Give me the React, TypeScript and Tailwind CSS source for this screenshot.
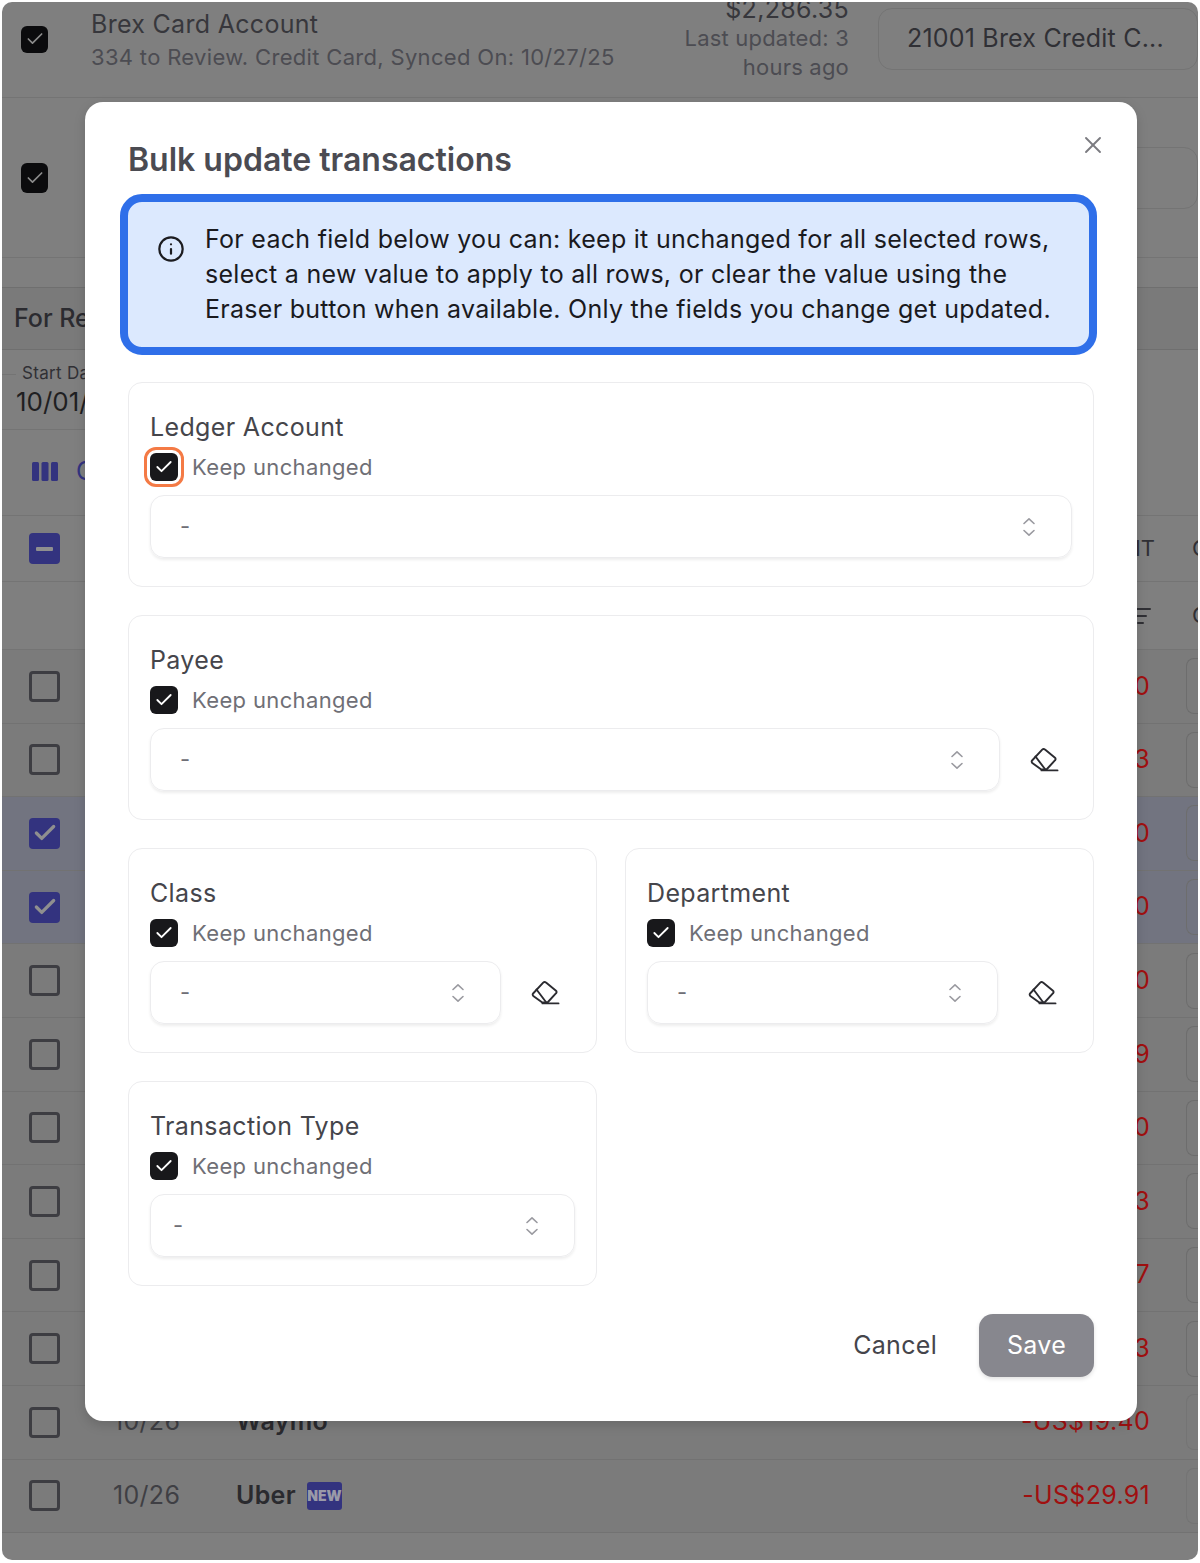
import { Check, Info, X } from 'lucide-react'

type Row = { amount: string; selected?: boolean; date?: string; name?: string; isNew?: boolean }

const ROWS: Row[] = [
  { amount: '-US$25.00' },
  { amount: '-US$41.73' },
  { amount: '-US$30.00', selected: true },
  { amount: '-US$30.00', selected: true },
  { amount: '-US$18.30' },
  { amount: '-US$12.59' },
  { amount: '-US$20.00' },
  { amount: '-US$16.43' },
  { amount: '-US$33.77' },
  { amount: '-US$22.83' },
  { amount: '-US$19.40', date: '10/26', name: 'Waymo' },
  { amount: '-US$29.91', date: '10/26', name: 'Uber', isNew: true },
]

function EraserIcon() {
  return (
    <svg width="30" height="28" viewBox="0 0 30 28" fill="none" stroke="#2b2b30" strokeWidth="1.9" strokeLinejoin="round" strokeLinecap="round">
      <path d="M13.2 3.6a2 2 0 0 1 2.8 0l10 8.2a1.6 1.6 0 0 1 .1 2.4l-8.6 9.3h-5.2l-9-6.6a1.6 1.6 0 0 1-.2-2.4z" />
      <path d="M6.5 10.5l10 13.3" />
      <path d="M12.5 24.4h16" />
    </svg>
  )
}

function UpDown() {
  return (
    <svg width="14" height="20" viewBox="0 0 14 20" fill="none" stroke="#9a9aa0" strokeWidth="1.6" strokeLinecap="round" strokeLinejoin="round">
      <path d="M2 6.5L7 1.8l5 4.7" />
      <path d="M2 13.5l5 4.7 5-4.7" />
    </svg>
  )
}

function DarkCheck({ focused }: { focused?: boolean }) {
  return (
    <span
      className={`flex h-[28px] w-[28px] shrink-0 items-center justify-center rounded-[6px] bg-[#18181b] ${
        focused ? 'outline-[3px] outline-offset-[3px] outline-[#f47a45]' : ''
      }`}
    >
      <Check size={20} color="#ffffff" strokeWidth={2.2} />
    </span>
  )
}

function FieldCard({ label, eraser, selectW, focused, dashLeft }: { label: string; eraser?: boolean; selectW?: string; focused?: boolean; dashLeft?: string }) {
  return (
    <div className="h-[205px] rounded-[14px] border border-[#ececee] px-[21px] pt-[28px]">
      <div className="h-[32px] text-[25px] leading-[32px] tracking-[0.35px] text-[#45454b]">{label}</div>
      <div className="mt-[4px] flex h-[40px] items-center gap-[14px]">
        <DarkCheck focused={focused} />
        <span className="text-[22px] tracking-[0.35px] text-[#6f6f76]">Keep unchanged</span>
      </div>
      <div className="mt-[8px] flex items-center">
        <div className={`flex h-[63px] items-center justify-between rounded-[14px] border border-[#ececee] pr-[35px] shadow-[0_2px_3px_rgba(0,0,0,0.07)] ${selectW ?? 'w-full'} ${dashLeft ?? 'pl-[29px]'}`}>
          <span className="text-[22px] text-[#6f6f76]">-</span>
          <UpDown />
        </div>
        {eraser && (
          <div className="ml-[29px]">
            <EraserIcon />
          </div>
        )}
      </div>
    </div>
  )
}

function AccountRow({ h, title, sub, amount, updated, button, border }: { h: string; title?: string; sub?: string; amount?: string; updated?: boolean; button?: string; border: string }) {
  return (
    <div className={`flex items-center border-b border-[#747474] pl-[19px] ${h} ${border}`}>
      <span className="flex h-[30px] w-[27px] shrink-0 items-center justify-center rounded-[6px] bg-[#0b0b0d]">
        <Check size={20} color="#8a8a8a" strokeWidth={2} />
      </span>
      <div className="ml-[43px] w-[540px]">
        {title && <div className="text-[25px] leading-[34px] tracking-[0.3px] text-[#37373c]">{title}</div>}
        {sub && <div className="mt-[1px] text-[22px] leading-[30px] tracking-[0.32px] text-[#4c4c52]">{sub}</div>}
      </div>
      <div className="mt-[-8px] w-[232px] text-right">
        {amount && <div className="text-[25px] leading-[24px] tracking-[0.3px] text-[#37373c]">{amount}</div>}
        {updated && <div className="ml-auto mt-[3px] w-[226px] text-[22px] leading-[29px] tracking-[0.2px] text-[#4c4c52]">Last updated: 3 hours ago</div>}
      </div>
      <div className="ml-[29px] flex h-[62px] w-[320px] shrink-0 items-center rounded-[14px] border border-[#747474] pl-[28px] text-[25px] tracking-[0.2px] text-[#303035]">
        {button}
      </div>
    </div>
  )
}

export default function App() {
  return (
    <div className="relative h-[1563px] w-[1200px] overflow-hidden bg-white font-['Inter',sans-serif]">
      {/* page behind the dialog */}
      <div className="mx-[2px] mt-[2px] h-[1558px] overflow-hidden rounded-[10px] bg-[#7f7f7f]">
        <div className="h-[96px] overflow-hidden border-b border-[#747474]">
          <div className="flex h-[74px] items-center pl-[19px]">
            <span className="flex h-[27px] w-[27px] shrink-0 items-center justify-center rounded-[6px] bg-[#0b0b0d]">
              <Check size={20} color="#8a8a8a" strokeWidth={2} />
            </span>
            <div className="ml-[43px] w-[540px]">
              <div className="text-[25px] leading-[34px] tracking-[0.3px] text-[#37373c]">Brex Card Account</div>
              <div className="mt-[1px] text-[22px] leading-[30px] tracking-[0.32px] text-[#4c4c52]">334 to Review. Credit Card, Synced On: 10/27/25</div>
            </div>
            <div className="w-[232px] text-right">
              <div className="text-[25px] leading-[24px] tracking-[0.3px] text-[#37373c]">$2,286.35</div>
              <div className="ml-auto mt-[3px] w-[226px] text-[22px] leading-[29px] tracking-[0.2px] text-[#4c4c52]">Last updated: 3 hours ago</div>
            </div>
            <div className="ml-[29px] flex h-[62px] w-[320px] shrink-0 items-center rounded-[14px] border border-[#747474] pl-[28px] text-[25px] tracking-[0.2px] text-[#303035]">
              21001 Brex Credit C...
            </div>
          </div>
        </div>
        <AccountRow h="h-[160px]" border="" button="" />
        <div className="h-[30px] border-b border-[#6f6f6f] bg-[#7f7f7f]" />
        <div className="flex h-[62px] items-center border-b border-[#6f6f6f] bg-[#7a7a7a] pl-[12px] text-[25px] font-medium text-[#2b2b30]">For Review</div>
        <div className="relative h-[80px]">
          <div className="absolute left-0 top-[24px] h-[56px] w-[400px] border-y border-[#747474]" />
          <span className="absolute left-[14px] top-[12px] bg-[#7f7f7f] px-[6px] text-[17px] leading-[22px] tracking-[0.3px] text-[#303035]">Start Date</span>
          <span className="absolute left-[14px] top-[36px] text-[26px] leading-[32px] text-[#1f1f22]">10/01/25</span>
        </div>
        <div className="flex h-[85px] items-center gap-[18px] pl-[30px] pb-[2px]">
          <svg width="26" height="19" viewBox="0 0 26 19" fill="#33337f">
            <rect x="0" y="0" width="7" height="19" rx="1.5" />
            <rect x="9.5" y="0" width="7" height="19" rx="1.5" />
            <rect x="19" y="0" width="7" height="19" rx="1.5" />
          </svg>
          <span className="text-[25px] text-[#33337f]">Columns</span>
        </div>
        <div className="flex h-[67px] items-center border-y border-[#747474] pl-[27px]">
          <span className="flex h-[31px] w-[31px] items-center justify-center rounded-[4px] bg-[#33337f]">
            <span className="h-[4px] w-[17px] rounded-[1px] bg-[#8f8f8f]" />
          </span>
          <span className="ml-auto text-[22px] text-[#303035]">AMOUNT</span>
          <span className="ml-[37px] w-[6px] text-[22px] text-[#303035]">C</span>
        </div>
        <div className="flex h-[68px] items-center justify-end border-b border-[#747474]">
          <svg width="18" height="18" viewBox="0 0 18 18" stroke="#303035" strokeWidth="2" strokeLinecap="round">
            <path d="M1 2h16M3 9h10M5 16h5" />
          </svg>
          <span className="ml-[41px] w-[6px] text-[22px] text-[#303035]">C</span>
        </div>
        {ROWS.map((row) => (
          <div
            key={row.amount + row.date + row.name}
            className={`flex h-[73.6px] items-center border-b border-[#727272] pl-[27px] ${row.selected ? 'bg-[#727480]' : 'bg-[#7b7b7b]'}`}
          >
            {row.selected ? (
              <span className="flex h-[31px] w-[31px] shrink-0 items-center justify-center rounded-[4px] bg-[#33337f]">
                <Check size={26} color="#8f8f8f" strokeWidth={3} />
              </span>
            ) : (
              <span className="h-[31px] w-[31px] shrink-0 rounded-[4px] border-[3px] border-[#3d3d42]" />
            )}
            <span className="ml-[53px] w-[123px] shrink-0 text-[25px] tracking-[0.3px] text-[#3f3f44]">{row.date}</span>
            <span className="shrink-0 text-[25px] font-semibold tracking-[0.3px] text-[#2a2a2e]">{row.name}</span>
            {row.isNew && (
              <span className="ml-[11px] flex h-[28px] w-[35px] shrink-0 items-center justify-center rounded-[3px] bg-[#33337f] text-[14px] font-black leading-none text-[#9a9aa8]">NEW</span>
            )}
            <span className="ml-auto shrink-0 text-[25px] tracking-[0.3px] text-[#a01010]">{row.amount}</span>
            <span className={`ml-[36px] h-[56px] w-[12px] shrink-0 rounded-l-[8px] border border-r-0 ${row.name === 'Uber' || row.name === 'Waymo' ? 'border-[#747474]' : 'border-[#6d6d6d]'}`} />
          </div>
        ))}
      </div>

      {/* dialog */}
      <div className="absolute left-[85px] top-[102px] h-[1319px] w-[1052px] rounded-[18px] bg-white px-[43px] shadow-[0_4px_12px_rgba(0,0,0,0.15)]">
        <button className="absolute right-[30px] top-[29px] text-[#7b7b80]">
          <X size={28} strokeWidth={1.6} />
        </button>
        <h2 className="pt-[38px] text-[32px] font-semibold leading-[40px] text-[#4b4b52]">Bulk update transactions</h2>
        <div className="mt-[14px] ml-[-8px] mr-[-3px] flex h-[161px] rounded-[22px] border-[8px] border-[#2f6fe9] bg-[#dce9fe] pl-[29px] pt-[20px]">
          <Info size={28} strokeWidth={1.9} color="#1c1c20" className="mt-[13px] shrink-0" />
          <p className="ml-[20px] text-[25px] leading-[35px] tracking-[0.28px] text-[#1a1a1e]">
            For each field below you can: keep it unchanged for all selected rows,
            <br />
            select a new value to apply to all rows, or clear the value using the
            <br />
            Eraser button when available. Only the fields you change get updated.
          </p>
        </div>
        <div className="mt-[27px] flex flex-col gap-[28px]">
          <FieldCard label="Ledger Account" focused />
          <FieldCard label="Payee" eraser selectW="w-[850px]" />
          <div className="grid grid-cols-2 gap-[28px]">
            <FieldCard label="Class" eraser selectW="w-[351px]" />
            <FieldCard label="Department" eraser selectW="w-[351px]" />
          </div>
          <div className="grid grid-cols-2 gap-[28px]">
            <FieldCard label="Transaction Type" dashLeft="pl-[22px]" />
          </div>
        </div>
        <div className="mt-[28px] flex items-center justify-end gap-[42px]">
          <button className="text-[25px] tracking-[0.3px] text-[#45454b]">Cancel</button>
          <button className="flex h-[63px] w-[115px] items-center justify-center rounded-[14px] bg-[#87878e] text-[25px] tracking-[0.3px] text-white shadow-[0_2px_4px_rgba(0,0,0,0.12)]">Save</button>
        </div>
      </div>
    </div>
  )
}
